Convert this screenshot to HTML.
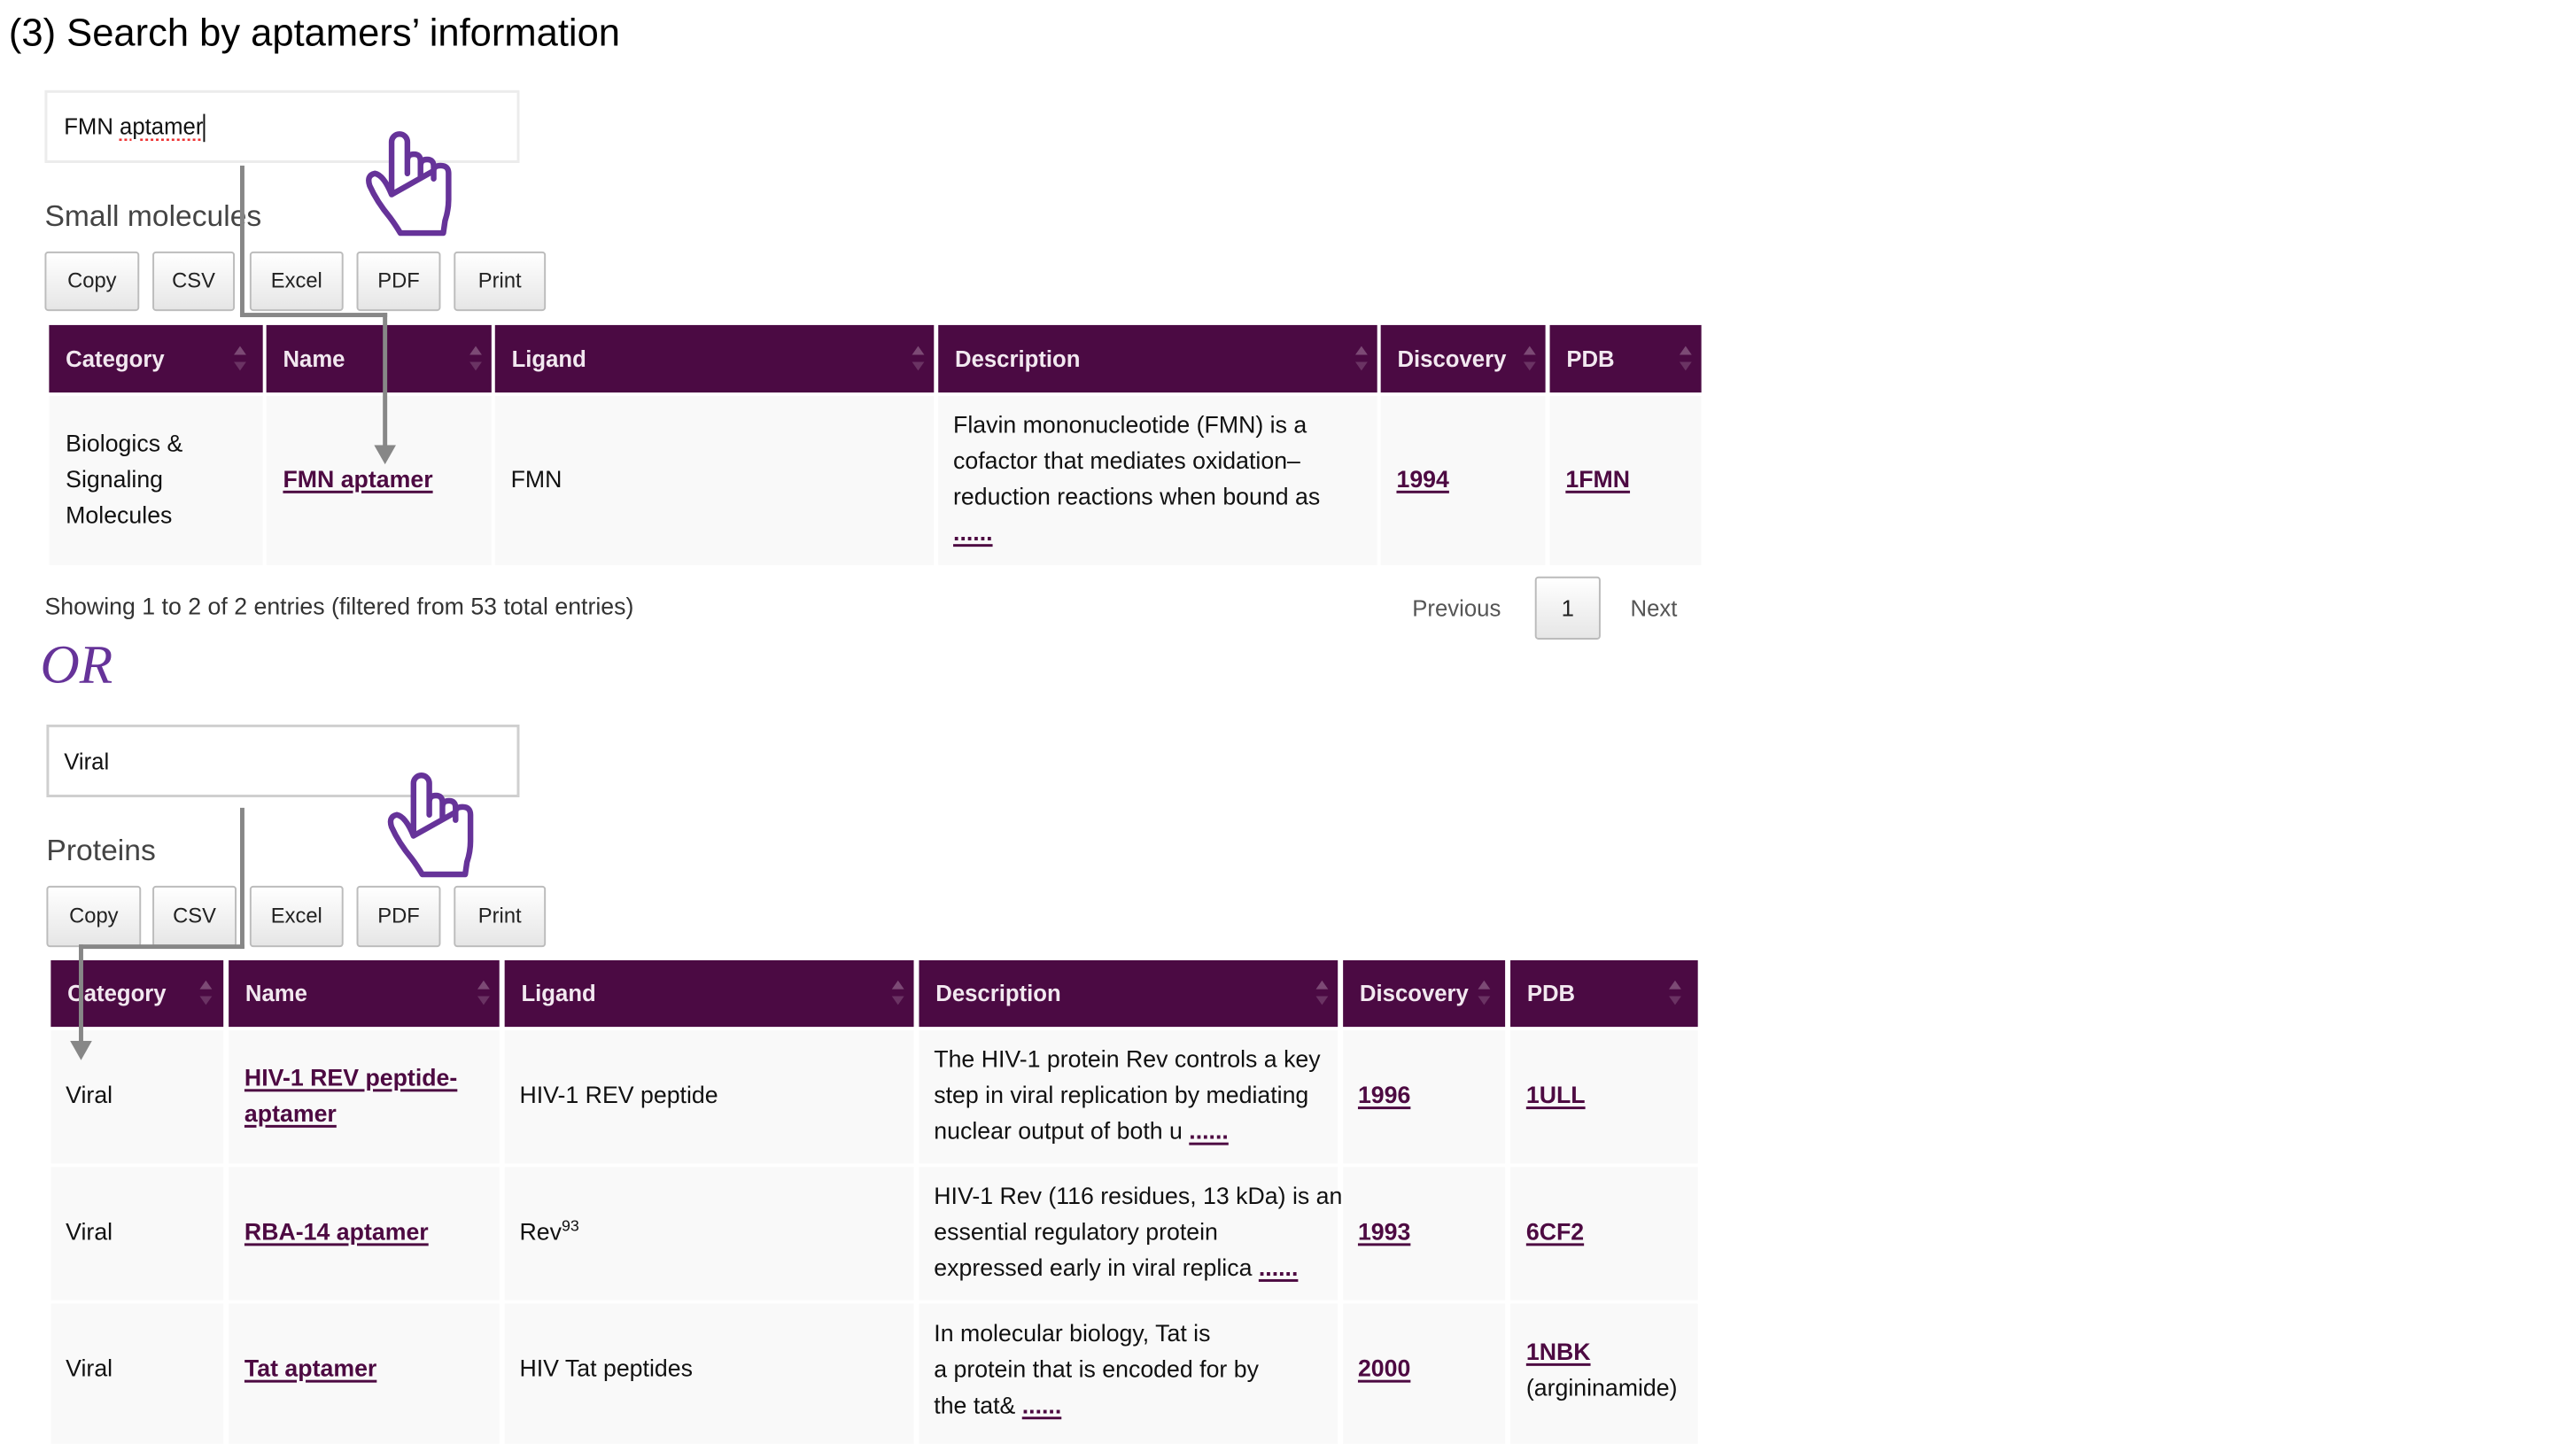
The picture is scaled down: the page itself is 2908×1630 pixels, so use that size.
<!DOCTYPE html>
<html><head><meta charset="utf-8">
<style>
*{margin:0;padding:0;box-sizing:border-box}
body{width:2908px;height:1622px;background:#fff;position:relative;overflow:hidden;font-family:"Liberation Sans",sans-serif;color:#111}
#w{position:absolute;left:0;top:0;width:2940px;height:1640px;transform:scale(0.989);transform-origin:0 0}
.a{position:absolute;white-space:nowrap}
.t{font-size:27px;line-height:41px}
.hd{position:absolute;background:#4b0a43;color:#f2e8f0;font-weight:bold;font-size:26px}
.hd span{position:absolute;left:19px;top:50%;transform:translateY(-50%)}
.hd i{position:absolute;right:18px;top:50%;width:0;height:0}
.hd i:before{content:"";position:absolute;left:-7px;top:-15px;border:7px solid transparent;border-bottom:10px solid #7c4a75;border-top:0}
.hd i:after{content:"";position:absolute;left:-7px;top:3px;border:7px solid transparent;border-top:10px solid #6a3363;border-bottom:0}
.row{position:absolute;background:#f9f9f9}
.lk{color:#4d0a42;font-weight:bold;text-decoration:underline;text-decoration-thickness:3px;text-underline-offset:4px}
.btn{position:absolute;border:2px solid #bcbcbc;border-radius:4px;background:linear-gradient(#fff,#e6e6e6);font-size:24px;display:flex;align-items:center;justify-content:center;color:#222}
.inp{position:absolute;background:#fff}
.ln{position:absolute;background:#878787}
sup{position:relative;top:-10px;font-size:18px;vertical-align:baseline;line-height:0}
</style></head><body><div id="w">

<div class="a" style="left:10px;top:13px;font-size:44px;line-height:50px;color:#000">(3) Search by aptamers’ information</div>

<!-- search 1 -->
<div class="inp" style="left:51px;top:103px;width:542px;height:83px;border:3px solid #ececec"></div>
<div class="a" style="left:73px;top:126px;font-size:26px;line-height:36px;color:#111">FMN <span style="text-decoration:underline dotted #e33;text-underline-offset:5px">aptamer</span><span style="display:inline-block;width:2px;height:32px;background:#111;vertical-align:middle"></span></div>
<div class="a" style="left:51px;top:227px;font-size:34px;line-height:40px;color:#444">Small molecules</div>

<div class="btn" style="left:51px;top:287px;width:108px;height:68px">Copy</div>
<div class="btn" style="left:174px;top:287px;width:94px;height:68px">CSV</div>
<div class="btn" style="left:285px;top:287px;width:107px;height:68px">Excel</div>
<div class="btn" style="left:407px;top:287px;width:96px;height:68px">PDF</div>
<div class="btn" style="left:518px;top:287px;width:105px;height:68px">Print</div>

<!-- table 1 -->
<div class="hd" style="left:56px;top:371px;width:244px;height:77px"><span>Category</span><i style="right:26px"></i></div>
<div class="hd" style="left:304px;top:371px;width:257px;height:77px"><span>Name</span><i></i></div>
<div class="hd" style="left:565px;top:371px;width:501px;height:77px"><span>Ligand</span><i></i></div>
<div class="hd" style="left:1071px;top:371px;width:501px;height:77px"><span>Description</span><i></i></div>
<div class="hd" style="left:1576px;top:371px;width:188px;height:77px"><span>Discovery</span><i></i></div>
<div class="hd" style="left:1769px;top:371px;width:173px;height:77px"><span>PDB</span><i></i></div>

<div class="row" style="left:56px;top:452px;width:244px;height:193px"></div>
<div class="row" style="left:304px;top:452px;width:257px;height:193px"></div>
<div class="row" style="left:565px;top:452px;width:501px;height:193px"></div>
<div class="row" style="left:1071px;top:452px;width:501px;height:193px"></div>
<div class="row" style="left:1576px;top:452px;width:188px;height:193px"></div>
<div class="row" style="left:1769px;top:452px;width:173px;height:193px"></div>

<div class="a t" style="left:75px;top:486px">Biologics &amp;<br>Signaling<br>Molecules</div>
<div class="a t" style="left:323px;top:527px"><span class="lk">FMN aptamer</span></div>
<div class="a t" style="left:583px;top:527px">FMN</div>
<div class="a t" style="left:1088px;top:465px">Flavin mononucleotide (FMN) is a<br>cofactor that mediates oxidation–<br>reduction reactions when bound as<br><span class="lk">......</span></div>
<div class="a t" style="left:1594px;top:527px"><span class="lk">1994</span></div>
<div class="a t" style="left:1787px;top:527px"><span class="lk">1FMN</span></div>

<div class="a" style="left:51px;top:674px;font-size:27px;line-height:36px;color:#333">Showing 1 to 2 of 2 entries (filtered from 53 total entries)</div>
<div class="a" style="left:1612px;top:676px;font-size:26px;line-height:36px;color:#555">Previous</div>
<div class="btn" style="left:1752px;top:658px;width:75px;height:72px;border-color:#bbb;font-size:26px">1</div>
<div class="a" style="left:1861px;top:676px;font-size:26px;line-height:36px;color:#555">Next</div>

<!-- connector 1 -->
<div class="ln" style="left:274px;top:189px;width:5px;height:172px"></div>
<div class="ln" style="left:274px;top:357px;width:168px;height:5px"></div>
<div class="ln" style="left:437px;top:357px;width:5px;height:155px"></div>
<svg class="a" style="left:427px;top:508px" width="25" height="24"><path d="M0,0 L25,0 L12.5,22Z" fill="#878787"/></svg>

<!-- hand 1 -->
<svg class="a" style="left:400px;top:140px" width="140" height="140" viewBox="0 0 140 140"><path d="M47,82 L47,22 A9,9 0 0 1 65,22 L65,58 M65,43 Q65,36 72.5,36 Q80,36 80,44 L80,62 M80,49 Q80,42 87.5,42 Q95,42 95,50 L95,64 M95,55 Q95,49 103,49 Q112,49 112,58 L112,88 Q112,100 108,112 L106,126 L57,126 Q51,116 45,108 Q30,90 22,72 Q18,60 28,58 Q38,60 47,82Z" fill="#fff" stroke="#663399" stroke-width="6.5" stroke-linejoin="round" stroke-linecap="round"/></svg>

<!-- OR -->
<div class="a" style="left:46px;top:727px;font-family:'Liberation Serif',serif;font-style:italic;font-size:62px;line-height:64px;color:#663399">OR</div>

<!-- search 2 -->
<div class="inp" style="left:53px;top:827px;width:540px;height:83px;border:3px solid #cfcfcf"></div>
<div class="a" style="left:73px;top:851px;font-size:26px;line-height:36px">Viral</div>
<div class="a" style="left:53px;top:951px;font-size:34px;line-height:40px;color:#444">Proteins</div>

<div class="btn" style="left:53px;top:1011px;width:108px;height:70px">Copy</div>
<div class="btn" style="left:174px;top:1011px;width:96px;height:70px">CSV</div>
<div class="btn" style="left:285px;top:1011px;width:107px;height:70px">Excel</div>
<div class="btn" style="left:407px;top:1011px;width:96px;height:70px">PDF</div>
<div class="btn" style="left:518px;top:1011px;width:105px;height:70px">Print</div>

<!-- table 2 -->
<div class="hd" style="left:58px;top:1096px;width:197px;height:76px"><span>Category</span><i style="right:20px"></i></div>
<div class="hd" style="left:261px;top:1096px;width:309px;height:76px"><span>Name</span><i></i></div>
<div class="hd" style="left:576px;top:1096px;width:467px;height:76px"><span>Ligand</span><i></i></div>
<div class="hd" style="left:1049px;top:1096px;width:478px;height:76px"><span>Description</span><i></i></div>
<div class="hd" style="left:1533px;top:1096px;width:185px;height:76px"><span>Discovery</span><i style="right:24px"></i></div>
<div class="hd" style="left:1724px;top:1096px;width:214px;height:76px"><span>PDB</span><i style="right:26px"></i></div>

<div class="row" style="left:58px;top:1176px;width:197px;height:152px"></div>
<div class="row" style="left:261px;top:1176px;width:309px;height:152px"></div>
<div class="row" style="left:576px;top:1176px;width:467px;height:152px"></div>
<div class="row" style="left:1049px;top:1176px;width:478px;height:152px"></div>
<div class="row" style="left:1533px;top:1176px;width:185px;height:152px"></div>
<div class="row" style="left:1724px;top:1176px;width:214px;height:152px"></div>

<div class="row" style="left:58px;top:1332px;width:197px;height:152px"></div>
<div class="row" style="left:261px;top:1332px;width:309px;height:152px"></div>
<div class="row" style="left:576px;top:1332px;width:467px;height:152px"></div>
<div class="row" style="left:1049px;top:1332px;width:478px;height:152px"></div>
<div class="row" style="left:1533px;top:1332px;width:185px;height:152px"></div>
<div class="row" style="left:1724px;top:1332px;width:214px;height:152px"></div>

<div class="row" style="left:58px;top:1488px;width:197px;height:160px"></div>
<div class="row" style="left:261px;top:1488px;width:309px;height:160px"></div>
<div class="row" style="left:576px;top:1488px;width:467px;height:160px"></div>
<div class="row" style="left:1049px;top:1488px;width:478px;height:160px"></div>
<div class="row" style="left:1533px;top:1488px;width:185px;height:160px"></div>
<div class="row" style="left:1724px;top:1488px;width:214px;height:160px"></div>

<div class="a t" style="left:75px;top:1230px">Viral</div>
<div class="a t" style="left:279px;top:1210px"><span class="lk">HIV-1 REV peptide-</span><br><span class="lk">aptamer</span></div>
<div class="a t" style="left:593px;top:1230px">HIV-1 REV peptide</div>
<div class="a t" style="left:1066px;top:1189px">The HIV-1 protein Rev controls a key<br>step in viral replication by mediating<br>nuclear output of both u <span class="lk">......</span></div>
<div class="a t" style="left:1550px;top:1230px"><span class="lk">1996</span></div>
<div class="a t" style="left:1742px;top:1230px"><span class="lk">1ULL</span></div>

<div class="a t" style="left:75px;top:1386px">Viral</div>
<div class="a t" style="left:279px;top:1386px"><span class="lk">RBA-14 aptamer</span></div>
<div class="a t" style="left:593px;top:1386px">Rev<sup>93</sup></div>
<div class="a t" style="left:1066px;top:1345px">HIV-1 Rev (116 residues, 13 kDa) is an<br>essential regulatory protein<br>expressed early in viral replica <span class="lk">......</span></div>
<div class="a t" style="left:1550px;top:1386px"><span class="lk">1993</span></div>
<div class="a t" style="left:1742px;top:1386px"><span class="lk">6CF2</span></div>

<div class="a t" style="left:75px;top:1542px">Viral</div>
<div class="a t" style="left:279px;top:1542px"><span class="lk">Tat aptamer</span></div>
<div class="a t" style="left:593px;top:1542px">HIV Tat peptides</div>
<div class="a t" style="left:1066px;top:1502px">In molecular biology, Tat is<br>a protein that is encoded for by<br>the tat&amp; <span class="lk">......</span></div>
<div class="a t" style="left:1550px;top:1542px"><span class="lk">2000</span></div>
<div class="a t" style="left:1742px;top:1523px"><span class="lk">1NBK</span><br>(argininamide)</div>

<!-- connector 2 -->
<div class="ln" style="left:274px;top:922px;width:5px;height:160px"></div>
<div class="ln" style="left:90px;top:1078px;width:189px;height:5px"></div>
<div class="ln" style="left:90px;top:1078px;width:5px;height:114px"></div>
<svg class="a" style="left:80px;top:1188px" width="25" height="24"><path d="M0,0 L25,0 L12.5,22Z" fill="#878787"/></svg>

<!-- hand 2 -->
<svg class="a" style="left:425px;top:872px" width="140" height="140" viewBox="0 0 140 140"><path d="M47,82 L47,22 A9,9 0 0 1 65,22 L65,58 M65,43 Q65,36 72.5,36 Q80,36 80,44 L80,62 M80,49 Q80,42 87.5,42 Q95,42 95,50 L95,64 M95,55 Q95,49 103,49 Q112,49 112,58 L112,88 Q112,100 108,112 L106,126 L57,126 Q51,116 45,108 Q30,90 22,72 Q18,60 28,58 Q38,60 47,82Z" fill="#fff" stroke="#663399" stroke-width="6.5" stroke-linejoin="round" stroke-linecap="round"/></svg>

</div></body></html>
